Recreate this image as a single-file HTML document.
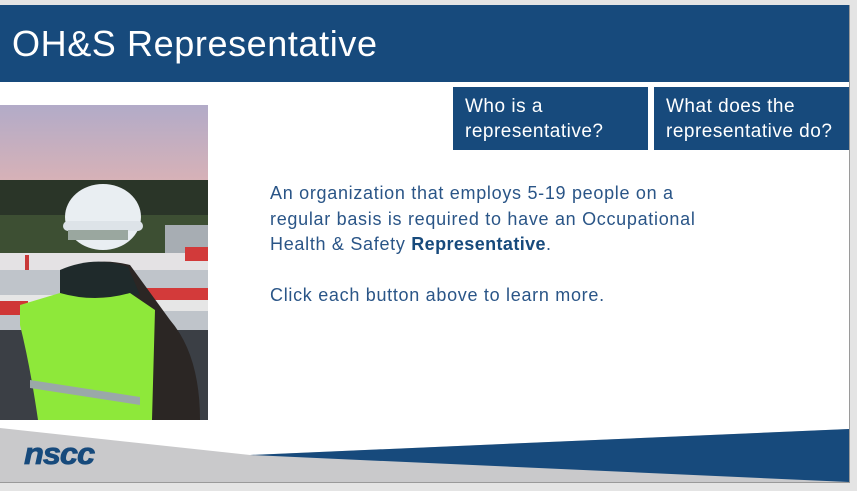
<!DOCTYPE html>
<html><head><meta charset="utf-8"><style>
html,body{margin:0;padding:0;}
body{width:857px;height:491px;background:#e4e4e4;position:relative;overflow:hidden;font-family:"Liberation Sans",sans-serif;}
#slide{position:absolute;left:0;top:5px;width:849px;height:477px;background:#fff;border-right:1px solid #9a9a9a;border-bottom:1px solid #9a9a9a;overflow:hidden;}
#title{position:absolute;left:0;top:0;width:849px;height:77px;background:#174a7c;color:#fff;font-size:36px;line-height:77px;padding-left:12px;box-sizing:border-box;letter-spacing:0.6px;}
.btn{position:absolute;top:82px;height:63px;background:#174a7c;color:#fff;font-size:19px;line-height:25px;padding:7px 0 0 12px;box-sizing:border-box;letter-spacing:0.5px;}
#txt{position:absolute;left:270px;top:176px;color:#2a5587;font-size:18px;line-height:25.5px;letter-spacing:0.7px;}
#txt b{color:#174a7c;letter-spacing:0.4px;}
#logo{position:absolute;left:24px;top:436px;font-size:31px;font-weight:bold;font-style:italic;color:#174a7c;letter-spacing:-1px;transform:scaleX(1.05);transform-origin:left;-webkit-text-stroke:0.8px #174a7c;}
</style></head><body>
<div id="slide">
<div id="title">OH&amp;S Representative</div>
<div class="btn" style="left:453px;width:195px;">Who is a<br>representative?</div>
<div class="btn" style="left:654px;width:195px;">What does the<br>representative do?</div>
<svg style="position:absolute;left:0;top:100px" width="208" height="315" viewBox="0 0 208 315">
<defs><linearGradient id="sky" x1="0" y1="0" x2="0" y2="1"><stop offset="0" stop-color="#b2abc8"/><stop offset="1" stop-color="#d9b2b6"/></linearGradient></defs>
<rect width="208" height="80" fill="url(#sky)"/>
<rect y="75" width="208" height="80" fill="#2a3528"/>
<rect y="110" width="208" height="45" fill="#3d4f33"/>
<rect x="165" y="120" width="43" height="80" fill="#a7adb3"/>
<rect y="148" width="208" height="17" fill="#e4e2e4"/>
<rect x="25" y="150" width="4" height="15" fill="#c83838"/>
<rect x="185" y="142" width="23" height="14" fill="#d23a3a"/>
<rect y="165" width="208" height="60" fill="#bfc4ca"/>
<rect y="190" width="208" height="16" fill="#e6e6e6"/>
<rect y="196" width="28" height="14" fill="#cf3636"/>
<rect x="130" y="183" width="80" height="12" fill="#d33a3a"/>
<rect y="225" width="208" height="90" fill="#3b3f45"/>
<path d="M60 170 Q90 150 130 160 L170 215 Q200 250 200 315 L60 315Z" fill="#2b2624"/>
<path d="M60 165 Q95 150 128 162 L140 190 L60 195Z" fill="#1f2a2b"/>
<path d="M20 200 L60 188 Q95 198 130 188 L155 205 L152 315 L38 315 Q30 260 20 220Z" fill="#8ee83a"/>
<path d="M30 275 L140 292 L140 300 L30 283Z" fill="#9aa8a8"/>
<ellipse cx="103" cy="112" rx="38" ry="33" fill="#e9eef2"/>
<rect x="63" y="116" width="80" height="10" rx="5" fill="#dde3e8"/>
<rect x="68" y="125" width="60" height="10" fill="#9aa79f"/>
</svg>
<div id="txt">An organization that employs 5-19 people on a<br>regular basis is required to have an Occupational<br>Health &amp; Safety <b>Representative</b>.<br><br>Click each button above to learn more.</div>
<svg style="position:absolute;left:0;top:0" width="849" height="477">
<polygon points="0,423 250,450 849,424 849,477 0,477" fill="#c9c9cb"/>
<polygon points="250,450 849,424 849,477" fill="#174a7c"/>
</svg>
</div>
<div id="logo">nscc</div>
</body></html>
